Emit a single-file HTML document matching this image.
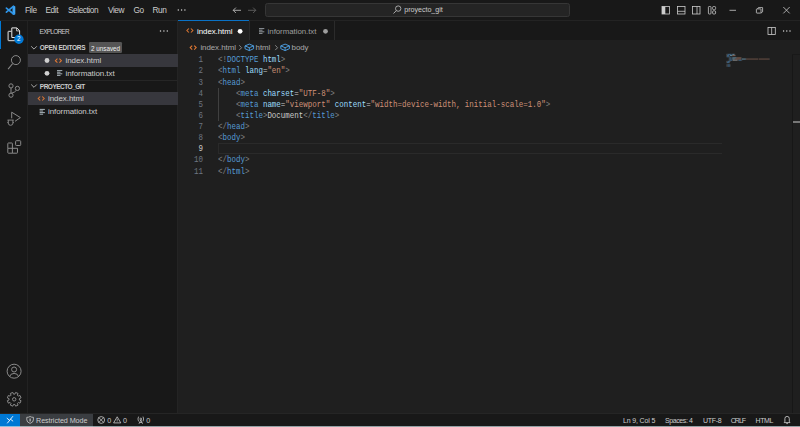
<!DOCTYPE html>
<html><head><meta charset="utf-8">
<style>
*{margin:0;padding:0;box-sizing:border-box}
html,body{width:800px;height:427px;overflow:hidden;background:#181818;font-family:"Liberation Sans",sans-serif;color:#cccccc;position:relative}
.a{position:absolute;white-space:pre;line-height:1}
.t{font-size:7.4px;color:#cccccc}
.m{font-family:"Liberation Mono",monospace;font-size:8.4px;line-height:11.13px;position:absolute;white-space:pre;transform:scaleX(0.89286);transform-origin:0 0}
svg{position:absolute;overflow:visible}
.p{color:#808080}.g{color:#569cd6}.at{color:#9cdcfe}.s{color:#ce9178}
</style></head><body>
<!-- ===== title bar ===== -->
<div class="a" style="left:0;top:20px;width:800px;height:1px;background:#232323"></div>
<svg style="left:0;top:0" width="20" height="20">
  <rect x="12.5" y="5.9" width="2.8" height="8.8" rx="0.9" fill="#3ea6f5"/>
  <path d="M13.6 6.2 L6.4 12.1 M13.6 14.0 L6.4 8.1" stroke="#2f95e8" stroke-width="1.7" stroke-linecap="round"/>
</svg>
<div class="a t" style="left:25px;top:5.9px;font-size:8.3px;letter-spacing:-0.45px">File</div>
<div class="a t" style="left:45.5px;top:5.9px;font-size:8.3px;letter-spacing:-0.45px">Edit</div>
<div class="a t" style="left:68px;top:5.9px;font-size:8.3px;letter-spacing:-0.45px">Selection</div>
<div class="a t" style="left:108px;top:5.9px;font-size:8.3px;letter-spacing:-0.45px">View</div>
<div class="a t" style="left:133.5px;top:5.9px;font-size:8.3px;letter-spacing:-0.45px">Go</div>
<div class="a t" style="left:152.5px;top:5.9px;font-size:8.3px;letter-spacing:-0.45px">Run</div>
<svg style="left:0;top:0" width="1" height="1">
  <circle cx="178.3" cy="10" r="0.72" fill="#d4d4d4"/><circle cx="181.6" cy="10" r="0.72" fill="#d4d4d4"/><circle cx="184.9" cy="10" r="0.72" fill="#d4d4d4"/>
</svg>
<!-- nav arrows -->
<svg style="left:0;top:0" width="1" height="1">
  <path d="M241 10.3 H233.2 M235.9 7.6 L233.2 10.3 L235.9 13" stroke="#cccccc" stroke-width="0.8" fill="none"/>
  <path d="M248 10.3 H255.8 M253.1 7.6 L255.8 10.3 L253.1 13" stroke="#6a6a6a" stroke-width="0.8" fill="none"/>
</svg>
<!-- command center -->
<div class="a" style="left:264.5px;top:3px;width:305px;height:13.5px;border:1px solid #363636;border-radius:2.5px;background:#242424"></div>
<svg style="left:0;top:0" width="1" height="1">
  <circle cx="398.2" cy="8.6" r="2.7" stroke="#cccccc" stroke-width="0.75" fill="none"/>
  <path d="M396.3 10.6 L393.5 13.5" stroke="#cccccc" stroke-width="0.8"/>
</svg>
<div class="a t" style="left:404.2px;top:6.3px;font-size:7.2px;letter-spacing:-0.05px">proyecto_git</div>
<!-- layout icons -->
<svg style="left:0;top:0" width="1" height="1">
  <rect x="662" y="6.5" width="7.5" height="7.5" stroke="#cccccc" stroke-width="0.8" fill="none"/>
  <rect x="662" y="6.5" width="3.3" height="7.5" fill="#cccccc"/>
  <rect x="677.5" y="6.5" width="7.5" height="7.5" stroke="#cccccc" stroke-width="0.8" fill="none"/>
  <path d="M677.5 11.3 H685" stroke="#cccccc" stroke-width="0.8"/>
  <rect x="692.5" y="6.5" width="7.5" height="7.5" stroke="#cccccc" stroke-width="0.8" fill="none"/>
  <path d="M697 6.5 V14" stroke="#cccccc" stroke-width="0.8"/>
  <rect x="708.4" y="6.5" width="2.6" height="7.5" rx="0.8" stroke="#cccccc" stroke-width="0.8" fill="none"/>
  <rect x="712.6" y="6.5" width="3" height="3.2" rx="1" stroke="#cccccc" stroke-width="0.8" fill="none"/>
  <rect x="712.6" y="10.8" width="3" height="3.2" rx="1" stroke="#cccccc" stroke-width="0.8" fill="none"/>
  <path d="M729.5 10.3 H736" stroke="#cccccc" stroke-width="0.8"/>
  <rect x="756.4" y="8.9" width="4.6" height="4.2" rx="0.5" stroke="#cccccc" stroke-width="0.8" fill="none"/>
  <path d="M757.6 8.9 L758.4 7.6 H762.6 V11.8 L761 13.1" stroke="#cccccc" stroke-width="0.8" fill="none" stroke-linejoin="round"/>
  <path d="M783.3 7 L789.7 13.4 M789.7 7 L783.3 13.4" stroke="#cccccc" stroke-width="0.8"/>
</svg>

<!-- ===== activity bar ===== -->
<div class="a" style="left:27.2px;top:21px;width:1px;height:392.5px;background:#222222"></div>
<div class="a" style="left:0;top:21px;width:1.3px;height:27.5px;background:#0078d4"></div>
<svg style="left:0;top:0" width="1" height="1">
  <!-- files -->
  <path d="M11.4 31.3 H8.6 Q8.1 31.3 8.1 31.8 V40.2 Q8.1 40.7 8.6 40.7 H15" stroke="#e6e6e6" stroke-width="1" fill="none"/>
  <path d="M11.8 27.9 H16.8 L19.6 30.7 V37.5 H11.8 Z" stroke="#e6e6e6" stroke-width="1" fill="none" stroke-linejoin="round"/>
  <path d="M16.6 27.9 V30.9 H19.6" stroke="#e6e6e6" stroke-width="0.8" fill="none"/>
  <circle cx="18.9" cy="39.2" r="4.7" fill="#0078d4"/>
  <!-- search -->
  <circle cx="15.9" cy="60.1" r="4.5" stroke="#8a8a8a" stroke-width="1" fill="none"/>
  <path d="M12.7 63.5 L8.1 69.1" stroke="#8a8a8a" stroke-width="1.1"/>
  <!-- source control -->
  <circle cx="11" cy="85.9" r="2.1" stroke="#8a8a8a" stroke-width="1" fill="none"/>
  <circle cx="11" cy="95.2" r="2.1" stroke="#8a8a8a" stroke-width="1" fill="none"/>
  <circle cx="17.4" cy="88.4" r="2.1" stroke="#8a8a8a" stroke-width="1" fill="none"/>
  <path d="M11 88 V93.1 M16.3 90.3 Q15.2 92.2 11.6 93.2" stroke="#8a8a8a" stroke-width="1" fill="none"/>
  <!-- run and debug -->
  <path d="M11.7 118.3 V112.2 L20.4 117.6 L15 121.3" stroke="#8a8a8a" stroke-width="1" fill="none" stroke-linejoin="round"/>
  <path d="M7.5 120.1 H13.7 M8.3 120.1 V123.1 Q8.3 125.3 10.6 125.3 Q12.9 125.3 12.9 123.1 V120.1 M7.3 122.6 H8.3 M12.9 122.6 H13.9" stroke="#8a8a8a" stroke-width="0.95" fill="none"/>
  <!-- extensions -->
  <path d="M7.8 148.5 V143.6 Q7.8 143 8.4 143 H11.9 Q12.4 143 12.4 143.6 V153.2 H8.4 Q7.8 153.2 7.8 152.6 Z M7.8 148.3 H17.5 V152.6 Q17.5 153.2 16.9 153.2 H12.4" stroke="#8a8a8a" stroke-width="1" fill="none"/>
  <rect x="15.6" y="140.7" width="5.1" height="4.8" rx="0.8" stroke="#8a8a8a" stroke-width="1" fill="none"/>
  <!-- account -->
  <circle cx="14.1" cy="371.2" r="7" stroke="#8a8a8a" stroke-width="1" fill="none"/>
  <circle cx="14.1" cy="369.5" r="2.5" stroke="#8a8a8a" stroke-width="1" fill="none"/>
  <path d="M9.6 376.6 Q10.4 373.4 14.1 373.4 Q17.8 373.4 18.6 376.6" stroke="#8a8a8a" stroke-width="1" fill="none"/>
  <!-- gear -->
  <path d="M19.36 399.98 L21.06 400.70 L20.04 403.16 L18.33 402.47 L17.37 403.43 L18.06 405.14 L15.60 406.16 L14.88 404.46 L13.52 404.46 L12.80 406.16 L10.34 405.14 L11.03 403.43 L10.07 402.47 L8.36 403.16 L7.34 400.70 L9.04 399.98 L9.04 398.62 L7.34 397.90 L8.36 395.44 L10.07 396.13 L11.03 395.17 L10.34 393.46 L12.80 392.44 L13.52 394.14 L14.88 394.14 L15.60 392.44 L18.06 393.46 L17.37 395.17 L18.33 396.13 L20.04 395.44 L21.06 397.90 L19.36 398.62 Z" stroke-linejoin="round" stroke="#8a8a8a" stroke-width="1" fill="none"/>
  <circle cx="14.2" cy="399.3" r="1.7" stroke="#8a8a8a" stroke-width="1" fill="none"/>
</svg>
<div class="a" style="left:17.1px;top:36.3px;font-size:6.3px;color:#ffffff">2</div>

<!-- ===== sidebar ===== -->
<div class="a" style="left:177px;top:21px;width:1px;height:392.5px;background:#242424"></div>
<div class="a t" style="left:39.6px;top:28.8px;font-size:6.4px;letter-spacing:-0.7px">EXPLORER</div>
<svg style="left:0;top:0" width="1" height="1">
  <circle cx="160.5" cy="31" r="0.72" fill="#d4d4d4"/><circle cx="163.9" cy="31" r="0.72" fill="#d4d4d4"/><circle cx="167.3" cy="31" r="0.72" fill="#d4d4d4"/>
  <path d="M31.2 46.3 L34 49.1 L36.8 46.3" stroke="#cccccc" stroke-width="0.8" fill="none"/>
  <path d="M31.2 84.5 L34 87.3 L36.8 84.5" stroke="#cccccc" stroke-width="0.8" fill="none"/>
</svg>
<div class="a t" style="left:39.8px;top:45px;font-size:6.5px;font-weight:bold;letter-spacing:-0.3px">OPEN EDITORS</div>
<div class="a" style="left:89px;top:42px;width:33px;height:11px;background:#555555;border-radius:1.2px"></div>
<div class="a t" style="left:91px;top:45.5px;font-size:6.3px;color:#f0f0f0">2 unsaved</div>
<div class="a" style="left:28px;top:54px;width:149.5px;height:12.8px;background:#37373d"></div>
<svg style="left:0;top:0" width="1" height="1">
  <circle cx="47" cy="60.5" r="2.4" fill="#d0d0d0"/>
  <circle cx="47" cy="73.3" r="2.4" fill="#d0d0d0"/>
</svg>
<div class="a t" style="left:65.5px;top:56.9px;font-size:7.95px;letter-spacing:-0.05px">index.html</div>
<div class="a t" style="left:65.5px;top:70.0px;font-size:7.95px;letter-spacing:-0.05px">information.txt</div>
<div class="a" style="left:28px;top:80px;width:149px;height:0.7px;background:#262626"></div>
<div class="a t" style="left:39.8px;top:83.6px;font-size:6.5px;font-weight:bold;letter-spacing:-0.5px">PROYECTO_GIT</div>
<div class="a" style="left:28px;top:92.1px;width:149.5px;height:13.2px;background:#37373d"></div>
<div class="a t" style="left:48px;top:95.1px;font-size:7.95px;letter-spacing:-0.05px">index.html</div>
<div class="a t" style="left:48px;top:108.2px;font-size:7.95px;letter-spacing:-0.05px">information.txt</div>

<!-- ===== editor ===== -->
<div class="a" style="left:178px;top:40px;width:622px;height:373.5px;background:#1f1f1f"></div>
<!-- tabs -->
<div class="a" style="left:178px;top:21px;width:70.5px;height:20px;background:#1f1f1f"></div>
<div class="a" style="left:178px;top:20px;width:70.5px;height:1.1px;background:#0a72c6"></div>
<div class="a" style="left:248.5px;top:21px;width:0.8px;height:19px;background:#2b2b2b"></div>
<div class="a" style="left:334.3px;top:21px;width:0.8px;height:19px;background:#2b2b2b"></div>
<div class="a t" style="left:197px;top:27.6px;font-size:7.9px;letter-spacing:-0.05px;color:#ffffff">index.html</div>
<div class="a t" style="left:267.6px;top:27.6px;font-size:7.9px;letter-spacing:-0.05px;color:#9d9d9d">information.txt</div>
<svg style="left:0;top:0" width="1" height="1">
  <circle cx="240.1" cy="31.3" r="2.4" fill="#ffffff"/>
  <circle cx="325.5" cy="31.3" r="2.4" fill="#9d9d9d"/>
  <!-- split -->
  <rect x="768" y="27.5" width="7.3" height="7" stroke="#cccccc" stroke-width="0.8" fill="none"/>
  <path d="M771.65 27.5 V34.5" stroke="#cccccc" stroke-width="0.8"/>
  <circle cx="783.6" cy="31" r="0.72" fill="#d4d4d4"/><circle cx="786.8" cy="31" r="0.72" fill="#d4d4d4"/><circle cx="790" cy="31" r="0.72" fill="#d4d4d4"/>
</svg>
<!-- breadcrumbs -->
<div class="a t" style="left:200.4px;top:43.8px;font-size:7.9px;letter-spacing:-0.05px;color:#a9a9a9">index.html</div>
<div class="a t" style="left:255.6px;top:43.8px;font-size:7.9px;letter-spacing:-0.05px;color:#a9a9a9">html</div>
<div class="a t" style="left:291.6px;top:43.8px;font-size:7.9px;letter-spacing:-0.05px;color:#a9a9a9">body</div>
<svg style="left:0;top:0" width="1" height="1">
  <path d="M239.2 45.3 L241.6 47.7 L239.2 50.1 M275.2 45.3 L277.6 47.7 L275.2 50.1" stroke="#a9a9a9" stroke-width="0.75" fill="none"/>
</svg>

<!-- code -->
<div class="a" style="left:218px;top:143.3px;width:504px;height:10.6px;border:0.8px solid #2a2a2a;border-right:none"></div>
<div class="a" style="left:218.25px;top:87.6px;width:0.8px;height:33.2px;background:#404040"></div>
<div class="m" style="left:179.7px;top:55.3px;width:25.76px;text-align:right;color:#6e7681">1
2
3
4
5
6
7
8
<span style="color:#cccccc">9</span>
10
11</div>
<div class="m" style="left:218.25px;top:55.3px;color:#cccccc"><span class="p">&lt;!</span><span class="g">DOCTYPE</span> <span class="at">html</span><span class="p">&gt;</span>
<span class="p">&lt;</span><span class="g">html</span> <span class="at">lang</span>=<span class="s">"en"</span><span class="p">&gt;</span>
<span class="p">&lt;</span><span class="g">head</span><span class="p">&gt;</span>
    <span class="p">&lt;</span><span class="g">meta</span> <span class="at">charset</span>=<span class="s">"UTF-8"</span><span class="p">&gt;</span>
    <span class="p">&lt;</span><span class="g">meta</span> <span class="at">name</span>=<span class="s">"viewport"</span> <span class="at">content</span>=<span class="s">"width=device-width, initial-scale=1.0"</span><span class="p">&gt;</span>
    <span class="p">&lt;</span><span class="g">title</span><span class="p">&gt;</span>Document<span class="p">&lt;/</span><span class="g">title</span><span class="p">&gt;</span>
<span class="p">&lt;/</span><span class="g">head</span><span class="p">&gt;</span>
<span class="p">&lt;</span><span class="g">body</span><span class="p">&gt;</span>

<span class="p">&lt;/</span><span class="g">body</span><span class="p">&gt;</span>
<span class="p">&lt;/</span><span class="g">html</span><span class="p">&gt;</span></div>

<!-- file icons -->
<svg style="left:0;top:0" width="1" height="1">
  <path d="M57.4 58.7 L55.4 60.7 L57.4 62.7 M59.4 58.7 L61.4 60.7 L59.4 62.7" stroke="#e37933" stroke-width="1.05" fill="none"/>
  <path d="M57 70.6 H62.3 M57 72.2 H60.5 M57 73.8 H62.3 M57 75.4 H60.5" stroke="#b8c4cc" stroke-width="0.9"/>
  <path d="M40.2 96.5 L38.2 98.5 L40.2 100.5 M42.2 96.5 L44.2 98.5 L42.2 100.5" stroke="#e37933" stroke-width="1.05" fill="none"/>
  <path d="M39.6 109.4 H44.9 M39.6 111 H43.1 M39.6 112.6 H44.9 M39.6 114.2 H43.1" stroke="#b8c4cc" stroke-width="0.9"/>
  <path d="M188.9 28.5 L186.9 30.5 L188.9 32.5 M190.9 28.5 L192.9 30.5 L190.9 32.5" stroke="#e37933" stroke-width="1.05" fill="none"/>
  <path d="M259 28.6 H264.3 M259 30.2 H262.5 M259 31.8 H264.3 M259 33.4 H262.5" stroke="#9da4aa" stroke-width="0.9"/>
  <path d="M192.2 45.6 L190.2 47.6 L192.2 49.6 M194.2 45.6 L196.2 47.6 L194.2 49.6" stroke="#e37933" stroke-width="1.05" fill="none"/>
  <!-- cubes -->
  <g stroke="#4fa6ed" stroke-width="0.9" fill="none" stroke-linejoin="round">
    <path d="M249.3 44.1 L253.6 45.9 V48.7 L249.3 50.6 L245 48.7 V45.9 Z M245 45.9 L249.3 47.7 L253.6 45.9 M249.3 47.7 V50.6"/>
    <path d="M285.1 44.1 L289.4 45.9 V48.7 L285.1 50.6 L280.8 48.7 V45.9 Z M280.8 45.9 L285.1 47.7 L289.4 45.9 M285.1 47.7 V50.6"/>
  </g>
</svg>
<!-- minimap -->
<svg style="left:0;top:0" width="1" height="1"><g opacity="0.5">
<rect x="726.40" y="53.80" width="1.17" height="1.17" fill="#808080"/><rect x="727.57" y="53.80" width="4.10" height="1.17" fill="#569cd6"/><rect x="732.26" y="53.80" width="2.34" height="1.17" fill="#9cdcfe"/><rect x="734.60" y="53.80" width="0.59" height="1.17" fill="#808080"/>
<rect x="726.40" y="54.97" width="0.59" height="1.17" fill="#808080"/><rect x="726.99" y="54.97" width="2.34" height="1.17" fill="#569cd6"/><rect x="729.91" y="54.97" width="2.34" height="1.17" fill="#9cdcfe"/><rect x="732.26" y="54.97" width="0.59" height="1.17" fill="#cccccc"/><rect x="732.84" y="54.97" width="2.34" height="1.17" fill="#ce9178"/><rect x="735.19" y="54.97" width="0.59" height="1.17" fill="#808080"/>
<rect x="726.40" y="56.14" width="0.59" height="1.17" fill="#808080"/><rect x="726.99" y="56.14" width="2.34" height="1.17" fill="#569cd6"/><rect x="729.33" y="56.14" width="0.59" height="1.17" fill="#808080"/>
<rect x="728.74" y="57.31" width="0.59" height="1.17" fill="#808080"/><rect x="729.33" y="57.31" width="2.34" height="1.17" fill="#569cd6"/><rect x="732.26" y="57.31" width="4.10" height="1.17" fill="#9cdcfe"/><rect x="736.36" y="57.31" width="0.59" height="1.17" fill="#cccccc"/><rect x="736.94" y="57.31" width="4.10" height="1.17" fill="#ce9178"/><rect x="741.04" y="57.31" width="0.59" height="1.17" fill="#808080"/>
<rect x="728.74" y="58.48" width="0.59" height="1.17" fill="#808080"/><rect x="729.33" y="58.48" width="2.34" height="1.17" fill="#569cd6"/><rect x="732.26" y="58.48" width="2.34" height="1.17" fill="#9cdcfe"/><rect x="734.60" y="58.48" width="0.59" height="1.17" fill="#cccccc"/><rect x="735.19" y="58.48" width="5.86" height="1.17" fill="#ce9178"/><rect x="741.63" y="58.48" width="4.10" height="1.17" fill="#9cdcfe"/><rect x="745.73" y="58.48" width="0.59" height="1.17" fill="#cccccc"/><rect x="746.31" y="58.48" width="11.71" height="1.17" fill="#ce9178" opacity="0.75"/><rect x="758.61" y="58.48" width="10.54" height="1.17" fill="#ce9178" opacity="0.75"/><rect x="769.16" y="58.48" width="0.59" height="1.17" fill="#808080"/>
<rect x="728.74" y="59.66" width="0.59" height="1.17" fill="#808080"/><rect x="729.33" y="59.66" width="2.93" height="1.17" fill="#569cd6"/><rect x="732.26" y="59.66" width="0.59" height="1.17" fill="#808080"/><rect x="732.84" y="59.66" width="4.69" height="1.17" fill="#cccccc"/><rect x="737.53" y="59.66" width="1.17" height="1.17" fill="#808080"/><rect x="738.70" y="59.66" width="2.93" height="1.17" fill="#569cd6"/><rect x="741.63" y="59.66" width="0.59" height="1.17" fill="#808080"/>
<rect x="726.40" y="60.83" width="1.17" height="1.17" fill="#808080"/><rect x="727.57" y="60.83" width="2.34" height="1.17" fill="#569cd6"/><rect x="729.91" y="60.83" width="0.59" height="1.17" fill="#808080"/>
<rect x="726.40" y="62.00" width="0.59" height="1.17" fill="#808080"/><rect x="726.99" y="62.00" width="2.34" height="1.17" fill="#569cd6"/><rect x="729.33" y="62.00" width="0.59" height="1.17" fill="#808080"/>

<rect x="726.40" y="64.34" width="1.17" height="1.17" fill="#808080"/><rect x="727.57" y="64.34" width="2.34" height="1.17" fill="#569cd6"/><rect x="729.91" y="64.34" width="0.59" height="1.17" fill="#808080"/>
<rect x="726.40" y="65.51" width="1.17" height="1.17" fill="#808080"/><rect x="727.57" y="65.51" width="2.34" height="1.17" fill="#569cd6"/><rect x="729.91" y="65.51" width="0.59" height="1.17" fill="#808080"/>
</g></svg>
<div class="a" style="left:792px;top:54.4px;width:1.1px;height:359px;background:#171717"></div>
<div class="a" style="left:792px;top:54.2px;width:8px;height:1px;background:#191919"></div>
<div class="a" style="left:792.6px;top:120.8px;width:7.4px;height:1.9px;background:#767676"></div>

<!-- ===== status bar ===== -->
<div class="a" style="left:0;top:413.3px;width:800px;height:13.7px;background:#181818;border-top:0.8px solid #252525"></div>
<div class="a" style="left:0;top:414px;width:20.2px;height:13px;background:#0078d4"></div>
<div class="a" style="left:20.2px;top:413.8px;width:72.5px;height:13.2px;background:#3a3d41"></div>
<svg style="left:0;top:0" width="1" height="1">
  <path d="M7.5 423 L12.7 416.5 M7.1 418.3 L9.5 420.3 M10.6 419.3 L12.8 421" stroke="#f4f8ff" stroke-width="0.9" fill="none" stroke-linecap="round"/>
  <path d="M30.1 416.5 Q28.4 417.5 26.8 417.3 V419.9 Q26.8 422.3 30.1 423.4 Q33.4 422.3 33.4 419.9 V417.3 Q31.8 417.5 30.1 416.5 Z" stroke="#cccccc" stroke-width="0.8" fill="none"/>
  <path d="M30.1 418.4 V421.4" stroke="#cccccc" stroke-width="1.1"/>
  <circle cx="101.2" cy="420" r="3.4" stroke="#cccccc" stroke-width="0.8" fill="none"/>
  <path d="M98.9 417.7 L103.5 422.3 M103.5 417.7 L98.9 422.3" stroke="#cccccc" stroke-width="0.75"/>
  <path d="M117.2 416.8 L120.8 422.9 H113.6 Z" stroke="#cccccc" stroke-width="0.8" fill="none" stroke-linejoin="round"/>
  <path d="M117.2 418.9 V420.9 M117.2 421.5 V422.1" stroke="#cccccc" stroke-width="0.7"/>
  <g stroke="#cccccc" stroke-width="0.75" fill="none">
    <circle cx="140.8" cy="419" r="0.9"/>
    <path d="M140.8 420 L139 423.8 M140.8 420 L142.6 423.8 M139.5 422.5 H142.1"/>
    <path d="M138.6 416.6 Q137.3 419 138.6 421.4 M143 416.6 Q144.3 419 143 421.4"/>
  </g>
  <path d="M784.2 422.6 Q784.9 422.2 784.9 421.2 V418.6 Q784.9 416.4 787.1 416.4 Q789.3 416.4 789.3 418.6 V421.2 Q789.3 422.2 790 422.6 Z M786.3 423.6 H787.9" stroke="#cccccc" stroke-width="0.85" fill="none" stroke-linejoin="round"/>
</svg>
<div class="a t" style="left:36px;top:416.6px;font-size:7.2px;letter-spacing:-0.06px">Restricted Mode</div>
<div class="a t" style="left:107.3px;top:416.6px;font-size:7.2px">0</div>
<div class="a t" style="left:123px;top:416.6px;font-size:7.2px">0</div>
<div class="a t" style="left:146.3px;top:416.6px;font-size:7.2px">0</div>
<div class="a t" style="left:623px;top:416.6px;font-size:7.0px;letter-spacing:-0.15px">Ln 9, Col 5</div>
<div class="a t" style="left:665px;top:416.6px;font-size:7.0px;letter-spacing:-0.4px">Spaces: 4</div>
<div class="a t" style="left:703px;top:416.6px;font-size:7.0px;letter-spacing:-0.3px">UTF-8</div>
<div class="a t" style="left:730.8px;top:416.6px;font-size:7.0px;letter-spacing:-1.0px">CRLF</div>
<div class="a t" style="left:755.6px;top:416.6px;font-size:7.0px;letter-spacing:-0.4px">HTML</div>
<div class="a" style="left:0;top:426px;width:800px;height:1px;background:rgba(200,220,225,0.7)"></div>
</body></html>
